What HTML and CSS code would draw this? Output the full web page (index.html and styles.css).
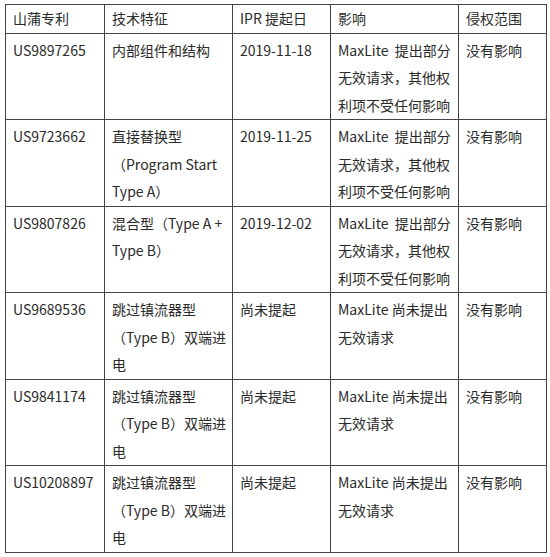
FILE: index.html
```html
<!DOCTYPE html>
<html lang="zh-CN">
<head>
<meta charset="utf-8">
<title>山蒲专利</title>
<link rel="stylesheet" href="styles.css">
</head>
<body>
<table class="patents">
  <colgroup>
    <col class="c-id">
    <col class="c-tech">
    <col class="c-date">
    <col class="c-impact">
    <col class="c-scope">
  </colgroup>
  <thead>
    <tr>
      <th>山蒲专利</th>
      <th>技术特征</th>
      <th>IPR 提起日</th>
      <th>影响</th>
      <th>侵权范围</th>
    </tr>
  </thead>
  <tbody>
    <tr>
      <td>US9897265</td>
      <td>内部组件和结构</td>
      <td>2019-11-18</td>
      <td>MaxLite&nbsp; 提出部分<br>无效请求，其他权<br>利项不受任何影响</td>
      <td>没有影响</td>
    </tr>
    <tr>
      <td>US9723662</td>
      <td>直接替换型<br>（Program Start<br>Type A）</td>
      <td>2019-11-25</td>
      <td>MaxLite&nbsp; 提出部分<br>无效请求，其他权<br>利项不受任何影响</td>
      <td>没有影响</td>
    </tr>
    <tr>
      <td>US9807826</td>
      <td>混合型（Type A +<br>Type B）</td>
      <td>2019-12-02</td>
      <td>MaxLite&nbsp; 提出部分<br>无效请求，其他权<br>利项不受任何影响</td>
      <td>没有影响</td>
    </tr>
    <tr>
      <td>US9689536</td>
      <td>跳过镇流器型<br>（Type B）双端进<br>电</td>
      <td>尚未提起</td>
      <td>MaxLite 尚未提出<br>无效请求</td>
      <td>没有影响</td>
    </tr>
    <tr>
      <td>US9841174</td>
      <td>跳过镇流器型<br>（Type B）双端进<br>电</td>
      <td>尚未提起</td>
      <td>MaxLite 尚未提出<br>无效请求</td>
      <td>没有影响</td>
    </tr>
    <tr>
      <td>US10208897</td>
      <td>跳过镇流器型<br>（Type B）双端进<br>电</td>
      <td>尚未提起</td>
      <td>MaxLite 尚未提出<br>无效请求</td>
      <td>没有影响</td>
    </tr>
  </tbody>
</table>
</body>
</html>
```

FILE: styles.css
```css
html, body {
  background: #ffffff;
}

body {
  margin: 4px 0 0 5px;
  font-family: "Noto Sans CJK SC", "Noto Sans", sans-serif;
  font-size: 14px;
  color: #2a2a2a;
}

.patents {
  border-collapse: collapse;
  table-layout: fixed;
  width: 542px;
}

.c-id { width: 99px; }
.c-tech { width: 128px; }
.c-date { width: 98px; }
.c-impact { width: 128px; }
.c-scope { width: 88px; }

.patents th,
.patents td {
  border: 1px solid #444444;
  text-align: left;
  vertical-align: top;
  font-weight: 400;
  line-height: 27.5px;
  padding: 3px 6px 0 7px;
  white-space: nowrap;
  overflow: hidden;
}

.patents th {
  padding-top: 0;
}
```
